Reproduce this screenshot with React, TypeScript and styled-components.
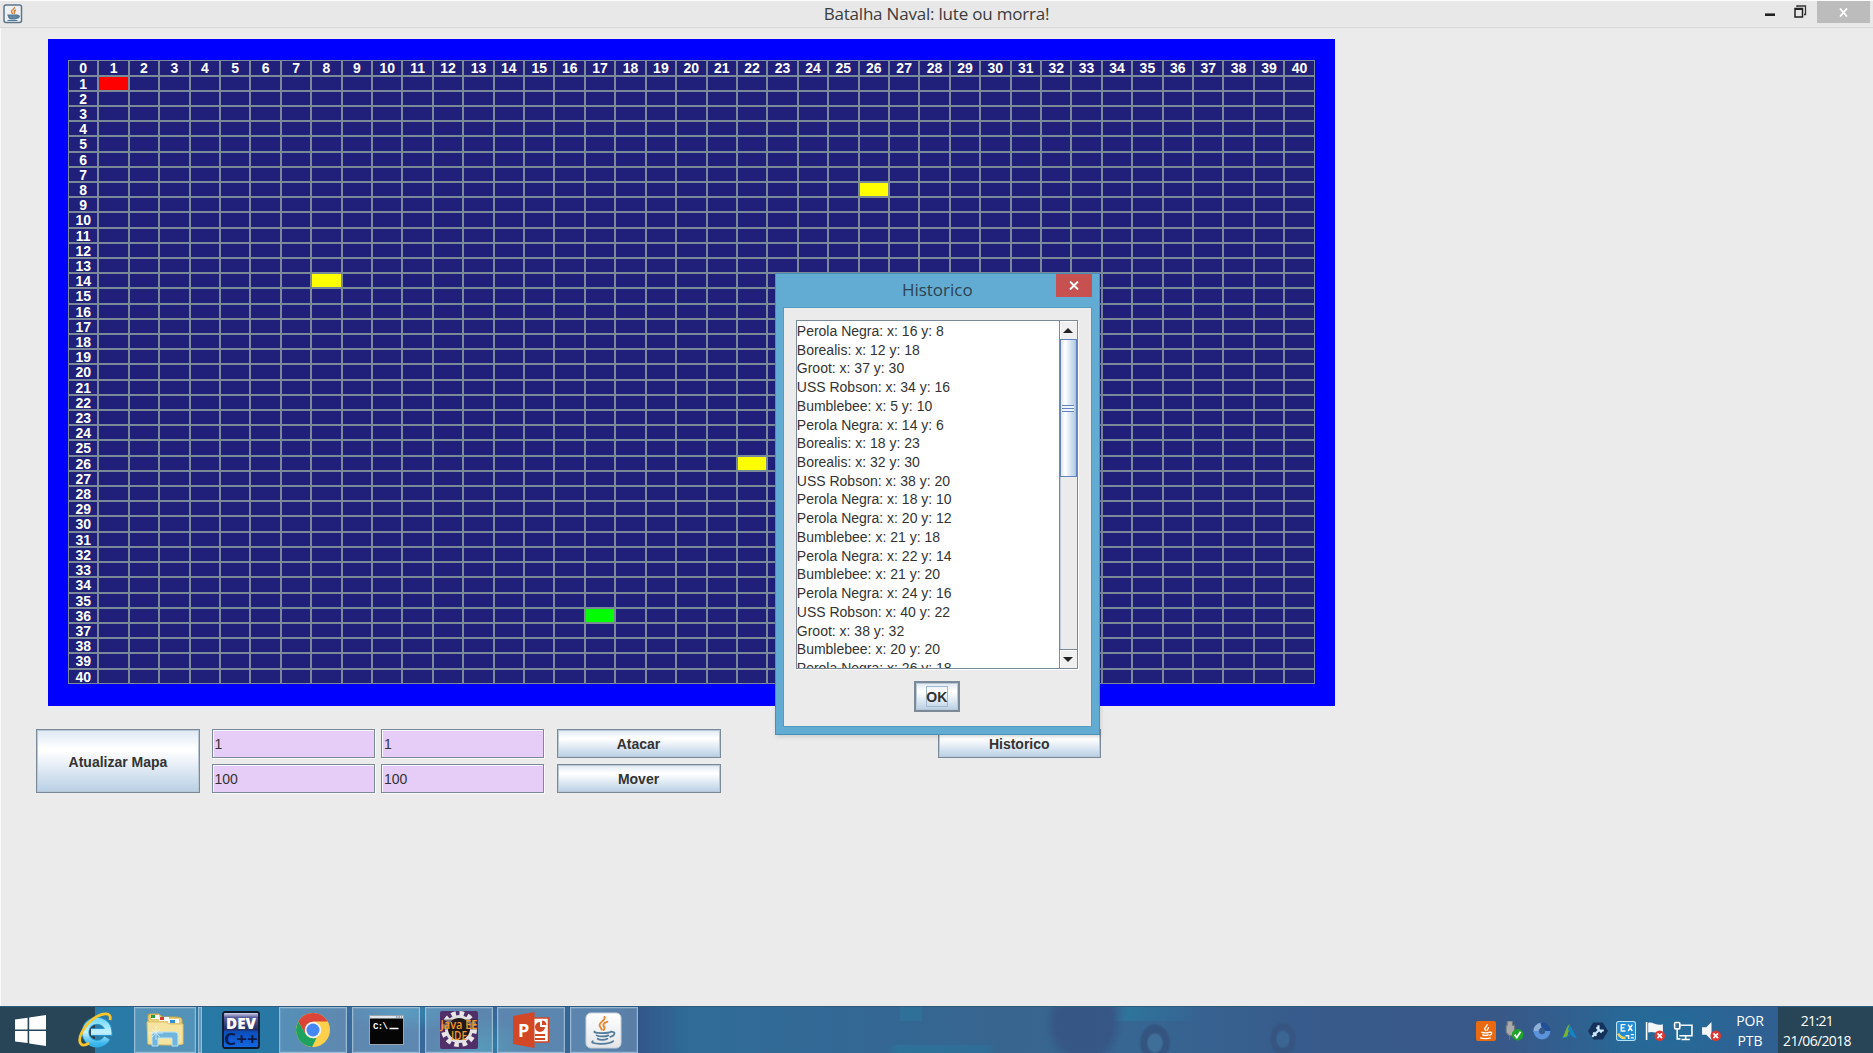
import React from "react";
import styled, { createGlobalStyle } from "styled-components";

const Global = createGlobalStyle`
  html, body { margin: 0; padding: 0; overflow: hidden; }
  * { box-sizing: border-box; }
`;
const SWING = `"Liberation Sans", Arial, sans-serif`;
const SEGOE = `"Open Sans", "Noto Sans", sans-serif`;

const Desktop = styled.div`
  position: relative; width: 1873px; height: 1053px; overflow: hidden;
  display: flex; flex-direction: column; background: #ebebeb; font-family: ${SWING};
`;
const TitleBar = styled.header`
  flex: none; height: 28px; display: grid; grid-template-columns: 1fr auto 1fr; align-items: start;
  background: #e8e8e8; border-top: 1px solid #fbfbfb; border-bottom: 1px solid #d9d9d9;
`;
const AppIcon = styled.div`padding: 3px 0 0 3px; line-height: 0;`;
const WindowTitle = styled.h1`
  margin: 0; font: 400 17px/26px ${SEGOE}; letter-spacing: -0.2px; color: #3c3c3c; white-space: nowrap;
`;
const WindowControls = styled.div`display: flex; justify-content: flex-end; padding-right: 3px; line-height: 0;`;
const CloseGrey = styled.div`
  width: 53px; height: 22px; margin-left: 4px; background: #bcbcbc; display: grid; place-items: center;
`;
const Client = styled.main`
  flex: 1; display: flex; flex-direction: column; align-items: flex-start;
  padding: 11.4px 0 0 35px; border-left: 1px solid #fafafa;
`;
const Board = styled.section`
  margin-left: 11.8px; width: 1287.2px; height: 666.4px; padding: 21px 0 0 20.2px; background: #0000ff;
`;
const Grid = styled.div`
  display: grid; grid-template-columns: repeat(41, 30.42px); grid-template-rows: repeat(41, 15.205px);
`;
const Cell = styled.div<{ $fill?: string }>`
  border: 1px solid #7a8a99; background: ${(p) => p.$fill ?? "#20207a"}; color: #fff;
  font: 700 14px/14px ${SWING}; text-align: center; overflow: hidden;
`;
const Controls = styled.section`
  display: flex; align-items: flex-start; padding-top: 23px;
`;
const Column = styled.div<{ $gap: number }>`
  display: flex; flex-direction: column; gap: 6px; margin-left: ${(p) => p.$gap}px;
`;
const SwingButton = styled.button<{ $w: number; $h: number }>`
  width: ${(p) => p.$w}px; height: ${(p) => p.$h}px; padding: 1px 0 0; border: 1px solid #7a8a99; border-radius: 0;
  box-shadow: inset 0 0 0 1px #b9c8d6;
  background: linear-gradient(#dde8f3 0%, #ffffff 30%, #ffffff 33%, #b8cfe5 100%);
  font: 700 14px ${SWING}; color: #333;
`;
const Field = styled.input`
  width: 163px; height: 29px; padding: 1px 2px 0; border: 1px solid #7a8a99; border-radius: 0; outline: none;
  box-shadow: inset 1px 1px 0 #f6f6fb, 1px 1px 0 #fafafa; background: #e6cdf8; font: 14px ${SWING}; color: #333;
`;
const Dialog = styled.div`
  position: absolute; left: 775px; top: 273px; width: 324.6px; height: 462px;
  display: flex; flex-direction: column; padding: 0 7px 7px; background: #62acd4;
  border: 1px solid #4a8fb5;
  box-shadow: 1px 2px 4px rgba(0,0,0,.12);
`;
const DialogBar = styled.div`
  flex: none; height: 33px; display: grid; grid-template-columns: 36px 1fr 36px;
`;
const DialogTitle = styled.h2`
  margin: 0; text-align: center; font: 400 17px/32px ${SEGOE}; color: #2d4350;
`;
const DialogClose = styled.div`
  height: 23px; background: #c75050; display: grid; place-items: center;
`;
const DialogBody = styled.div`
  flex: 1; min-height: 0; display: flex; flex-direction: column; align-items: center; padding: 12px 1px 0 0;
  background: #ebebeb; border: 1px solid #559bc0;
`;
const ScrollPane = styled.div`
  width: 282px; height: 349px; display: flex; border: 1px solid #7a8a99; background: #fff;
  box-shadow: 1px 1px 0 #fff; margin-bottom: 12px;
`;
const List = styled.ul`
  flex: 1; margin: 0; padding: 1px 0 0; list-style: none; overflow: hidden;
  font: 14px/18.72px ${SWING}; color: #333;
`;
const Item = styled.li`white-space: nowrap;`;
const ScrollBar = styled.div`
  width: 18px; display: flex; flex-direction: column; border-left: 1px solid #7a8a99; background: #ebebeb;
`;
const Arrow = styled.div`
  flex: none; height: 18px; display: grid; place-items: center; background: #f0f0f0;
  box-shadow: inset 1px 1px 0 #fff; line-height: 0;
`;
const Thumb = styled.div`
  height: 138px; border: 1px solid #6382bf; display: grid; place-items: center;
  background: linear-gradient(90deg, #dce7f3, #ffffff 28%, #b8cfe5 90%, #a9c1da);
`;
const Grip = styled.div`
  width: 12px; height: 7px;
  background: repeating-linear-gradient(#6382bf 0 1px, #eef4fb 1px 3px);
`;
const Track = styled.div`flex: 1; border-bottom: 1px solid #7a8a99; box-shadow: inset 1px 0 0 #b9c8d9;`;
const OkButton = styled(SwingButton)`
  flex: none; border: 2px solid #7a8a99; padding: 0; display: grid; place-items: center;
`;
const FocusRing = styled.span`
  border: 1px solid #a3b8cc; width: 22px; height: 21px; line-height: 20px; display: flex; justify-content: center;
`;

const Taskbar = styled.footer`
  flex: none; height: 47px; display: flex; align-items: stretch; border-top: 1px solid #315b7c;
  background:
    radial-gradient(ellipse 60px 20px at 405px 5px, rgba(50,150,190,.7), transparent),
    radial-gradient(ellipse 50px 30px at 480px 40px, rgba(40,150,180,.6), transparent),
    linear-gradient(#2f7099, #2f7099) 900px 0 / 22px 14px no-repeat,
    linear-gradient(90deg, transparent, #2c7299 10%, #2f6d97 90%, transparent) 887px 38px / 110px 9px no-repeat,
    radial-gradient(ellipse 16px 20px at 1155px 36px, #3f6f99 40%, #34557f 55% 85%, transparent),
    radial-gradient(ellipse 14px 18px at 1283px 32px, #3b6592 40%, #365580 55% 80%, transparent),
    linear-gradient(100deg, transparent 4%, rgba(44,118,156,.85) 18%, transparent) 1112px 0 / 90px 14px no-repeat,
    radial-gradient(ellipse 40px 46px at 1084px 16px, rgba(54,82,130,.75) 70%, transparent),
    radial-gradient(ellipse 90px 60px at 1670px 20px, rgba(32,110,155,.7), transparent),
    linear-gradient(90deg, #2a7ca8 0, #2878a6 270px, #3a6a9b 340px, #346596 580px, #32588a 640px, #2f6c97 690px, #346794 880px, #37658f 1000px, #376693 1120px, #375f8e 1250px, #375a8b 1320px, #385888 1500px, #2b6594 1620px, #305f92 1770px);
`;
const StartArea = styled.div`
  width: 95px; background: #284558; display: flex; align-items: center; padding-left: 15px;
`;
const IeSlot = styled.div`width: 39px; display: flex; align-items: center; margin-left: -17px; z-index: 1;`;
const TaskButton = styled.div<{ $w: number; $ml: number; $open?: boolean }>`
  width: ${(p) => p.$w}px; margin-left: ${(p) => p.$ml}px; display: grid; place-items: center;
  ${(p) => p.$open && `
    background: rgba(160,190,215,.36); border: 1px solid rgba(185,210,228,.65);
    box-shadow: inset 0 0 0 1px rgba(150,185,210,.25);`}
`;
const Tray = styled.div`
  margin-left: auto; display: flex; align-items: center; gap: 8.2px; padding: 2px 6px 0 0;
`;
const Lang = styled.div`
  width: 46px; margin-right: 5px; text-align: center; color: #fff; font: 14px/20px ${SEGOE}; padding-top: 4px;
  letter-spacing: -.1px;
`;
const Clock = styled.div`
  width: 95px; padding: 4px 17px 0 0; background: #284558; text-align: center; color: #fff;
  font: 14px/20px ${SEGOE}; letter-spacing: -.65px;
`;

const ships: Record<string, string> = {
  "1,1": "#ff0000", "26,8": "#ffff00", "8,14": "#ffff00", "22,26": "#ffff00", "17,36": "#00ff00",
};
const history = [
  "Perola Negra: x: 16 y: 8", "Borealis: x: 12 y: 18", "Groot: x: 37 y: 30", "USS Robson: x: 34 y: 16",
  "Bumblebee: x: 5 y: 10", "Perola Negra: x: 14 y: 6", "Borealis: x: 18 y: 23", "Borealis: x: 32 y: 30",
  "USS Robson: x: 38 y: 20", "Perola Negra: x: 18 y: 10", "Perola Negra: x: 20 y: 12", "Bumblebee: x: 21 y: 18",
  "Perola Negra: x: 22 y: 14", "Bumblebee: x: 21 y: 20", "Perola Negra: x: 24 y: 16", "USS Robson: x: 40 y: 22",
  "Groot: x: 38 y: 32", "Bumblebee: x: 20 y: 20", "Perola Negra: x: 26 y: 18",
];
const range = Array.from({ length: 41 }, (_, i) => i);

const Cup = ({ steam, cup }: { steam: string; cup: string }) => (
  <g fill="none" strokeLinecap="round">
    <path d="M20 5c2 4-6 5-5 9 .4 1.700 2 2.500 2 4M23 10c-4 1.500-5 3-3.500 5 1 1.500 .5 2.500-.5 3.500" stroke={steam} strokeWidth="1.900" />
    <path d="M10 20c-3 2 14 2.500 17 0M12 24c2 1.500 9 1.500 12 0M13 27.500c2 1.500 7 1.500 10 0M27 20.500c5-1 4 4-1 5M8 30c-5 3 17 4 21 0" stroke={cup} strokeWidth="1.800" />
  </g>
);
const JavaIcon = ({ size }: { size: number }) => (
  <svg width={size} height={size} viewBox="0 0 38 38">
    <defs><linearGradient id="jv" x2="0" y2="1"><stop stopColor="#fff" /><stop offset="1" stopColor="#e3e6e8" /></linearGradient></defs>
    <rect x="1" y="1" width="36" height="36" rx="5" fill="url(#jv)" stroke="#c4d0d9" />
    <Cup steam="#e9822c" cup="#527b9c" />
  </svg>
);
const FrameIcon = () => (
  <svg width="20" height="20" viewBox="0 0 20 20">
    <rect x="1" y="1" width="17.500" height="17.500" rx="2" fill="#edf1f5" stroke="#5f7687" strokeWidth="1.500" />
    <path d="M11.500 3c1 2-4 3-3 5 .5 1 1 1 1 2M13 6c-3 1-1 2-2 4" fill="none" stroke="#e77b2a" strokeWidth="1.400" />
    <path d="M5 11h9v2.500c0 2-7.500 2-8 0zM14 11.500c4-.5 2 3-.5 2.500M4.500 16.500h10" fill="#6488a3" stroke="#537a97" strokeWidth="1.200" />
  </svg>
);
const Windows = () => (
  <svg width="31" height="31" viewBox="0 0 31 31" fill="#fff">
    <path d="M0 4.500 12.600 2.700V14.500H0zM14.200 2.500 31 0v14.500H14.200zM0 16h12.600v12L0 26.500zM14.200 16H31v15l-16.800-2.500z" />
  </svg>
);
const Explorer = () => (
  <svg width="35" height="36" viewBox="0 0 35 36">
    <defs>
      <linearGradient id="ie" x2="0" y2="1"><stop stopColor="#7edcff" /><stop offset=".5" stopColor="#c5f1ff" /><stop offset="1" stopColor="#36b5ec" /></linearGradient>
    </defs>
    <path d="M29 26A11.500 11.500 0 1 1 30.500 20H13" fill="none" stroke="#2d9fd5" strokeWidth="7.500" />
    <path d="M29 26A11.500 11.500 0 1 1 30.500 20H13" fill="none" stroke="url(#ie)" strokeWidth="5.800" />
    <path d="M32 8C34 0 25 0 15 7 5 15-1 27 3 32c2 2 5 1 8-1" fill="none" stroke="#f6c62c" strokeWidth="2.800" />
  </svg>
);
const Folder = () => (
  <svg width="38" height="36" viewBox="0 0 38 36">
    <path d="M2 4q0-2 2-2h9l3 3h12q9 0 8 3v24H2z" fill="#e6cd78" stroke="#c9a944" />
    <rect x="5" y="3" width="8" height="4" fill="#fff" /><rect x="5" y="3" width="4" height="3" fill="#23a335" />
    <rect x="13" y="5" width="10" height="4" fill="#fff" /><rect x="14" y="5" width="4" height="3" fill="#d2402d" />
    <rect x="22" y="7" width="11" height="4" fill="#fff" /><rect x="24" y="8" width="5" height="3" fill="#2f8ed8" />
    <path d="M1 10h19l3 2h14v20q-12 2-35 0z" fill="#f5e49f" stroke="#dfc36a" />
    <path d="M6 34V23q0-3 3-3h20q3 0 3 3v11h-6v-8H12v8z" fill="#72b5dc" stroke="#b9e5f7" />
    <path d="M10 14v14M3 21h14M6 17l8 8M14 17l-8 8" stroke="#fff" strokeWidth="1" opacity=".6" />
  </svg>
);
const DevCpp = () => (
  <svg width="38" height="38" viewBox="0 0 38 38">
    <defs><linearGradient id="dv" x2="0" y2="1"><stop stopColor="#e9e9f6" /><stop offset=".15" stopColor="#5b5e9e" /><stop offset=".48" stopColor="#252c60" /><stop offset=".55" stopColor="#0c4fbd" /><stop offset="1" stopColor="#1368e4" /></linearGradient></defs>
    <rect x="1" y="1" width="36" height="36" rx="2" fill="url(#dv)" stroke="#10182b" strokeWidth="1.800" />
    <text x="19" y="18" textAnchor="middle" textLength="30" lengthAdjust="spacingAndGlyphs" fontFamily={SEGOE} fontWeight="800" fontSize="15" fill="#fff">DEV</text>
    <text x="19" y="34" textAnchor="middle" textLength="34" lengthAdjust="spacingAndGlyphs" fontFamily={SEGOE} fontWeight="700" fontSize="16" fill="#0a1c4a">C++</text>
  </svg>
);
const Chrome = () => (
  <svg width="36" height="36" viewBox="0 0 36 36">
    <circle cx="18" cy="18" r="17" fill="#fcd04b" />
    <path d="M3.300 9.500A17 17 0 0 1 32.700 9.500L18 9.500 10.600 22.200z" fill="#db4437" />
    <path d="M3.300 9.500 10.600 22.200Q14 27 21.500 26L17 35A17 17 0 0 1 3.300 9.500z" fill="#1da260" />
    <circle cx="18" cy="18" r="8.300" fill="#f3f3f3" /><circle cx="18" cy="18" r="6.500" fill="#4587f3" />
  </svg>
);
const Cmd = () => (
  <svg width="35" height="30" viewBox="0 0 35 30">
    <rect x=".5" y=".5" width="34" height="29" fill="#050505" stroke="#9aa5ad" />
    <path d="M1 1h33v2.500H1z" fill="#dfe6ec" /><path d="M27 2h6" stroke="#536677" strokeDasharray="1.500 1" />
    <text x="4" y="14" fontFamily="Liberation Mono, monospace" fontWeight="700" fontSize="9" textLength="15" fill="#fff">C:\</text>
    <path d="M20.500 13.500h9" stroke="#fff" strokeWidth="1.500" />
  </svg>
);
const JavaEE = () => (
  <svg width="38" height="38" viewBox="0 0 38 38" overflow="visible">
    <rect width="38" height="38" rx="2" fill="#513069" />
    <circle cx="19" cy="18" r="15.500" fill="none" stroke="#e7e7e7" strokeWidth="5" strokeDasharray="4.500 3.620" />
    <circle cx="19" cy="18" r="12.500" fill="#191919" stroke="#e2e2e2" strokeWidth="3" />
    <path d="M1 8.500h36v10H1z" fill="#2a1712" opacity=".55" />
    <g fontFamily={SEGOE} fontWeight="600" fill="#f8972b">
      <text x=".5" y="18" fontSize="12" textLength="37" lengthAdjust="spacingAndGlyphs">Java EE</text>
      <text x="11" y="28.500" fontSize="12" textLength="16" lengthAdjust="spacingAndGlyphs">IDE</text>
    </g>
  </svg>
);
const PowerPoint = () => (
  <svg width="37" height="36" viewBox="0 0 37 36">
    <rect x="18" y="6" width="17.500" height="24" fill="#fff" stroke="#d24726" strokeWidth="1.500" />
    <path d="M27 10a5 5 0 1 0 5 5h-5zM29 8.500v4.500h4.500a4.500 4.500 0 0 0-4.500-4.500zM22 22h10v2H22zM22 26h10v2H22z" fill="#d24726" />
    <path d="M0 4 21.500 0v36L0 32z" fill="#d24726" />
    <text x="5" y="25" fontFamily={SEGOE} fontWeight="700" fontSize="18" fill="#fff">P</text>
  </svg>
);
const RedX = () => (
  <g><circle cx="14" cy="14" r="5" fill="#e03632" /><path d="m11.800 11.800 4.400 4.400M16.200 11.800l-4.400 4.400" stroke="#fff" strokeWidth="1.600" /></g>
);
const trayIcons = [
  <g><rect width="19" height="19" rx="2" fill="#e96a10" /><path d="M10.500 3c1 2-3.500 3-2 5l1 1.500M12 6l-1.500 3M5 10.500q4 1.500 8 0M6 13q3 1.500 6 0M13 10.500c3 0 2 3-.5 3M4 16q5 1.500 10 0" fill="none" stroke="#fff" strokeWidth="1.300" /></g>,
  <g><path d="M3 0h5v4h2v7l-2 3H5l-3-3V4h1zM5.500 14v4" fill="#aaa" stroke="#6d757c" strokeWidth="1" /><circle cx="13" cy="13" r="5.500" fill="#20a52b" /><path d="m10 13 2.200 2.700 3.500-5.500" fill="none" stroke="#fff" strokeWidth="1.700" /></g>,
  <g fill="none" strokeWidth="5"><path d="M4 10.500A5.500 5.500 0 0 1 9.500 4" stroke="#8fb0d9" /><path d="M8.500 4a5.500 5.500 0 0 1 6.500 6.500" stroke="#234f94" /><path d="M15 9.500a5.500 5.500 0 0 1-11 0" stroke="#5c93dc" /></g>,
  <g><path d="M2 16c3-3 3-10 7-13l1.500 5c-4 1-2 7-5 8z" fill="#7ab42a" /><path d="m9 3 7 13c-3 0-5-1-6-4L7.500 8z" fill="#1683c4" /><path d="M2 16c3 0 7-2 9-5" stroke="#1683c4" strokeWidth="1" fill="none" /></g>,
  <g><path d="M5 1.500h9l5 8-5 8H5l-5-8z" fill="#15325a" /><path d="m4 15 6-6M10 4v5h5M8 6l5 5M5 11l3 3" stroke="#cce9fc" strokeWidth="2" fill="none" /></g>,
  <g><rect x=".5" y=".5" width="18" height="18" rx="2" fill="#238bd1" stroke="#b7e2f7" /><path d="M5 3.500h4M5 6.500h3M5 9.500h4M5 3v7M11.500 3.500l4 6M15.500 3.500l-4 6M9 14h3v3M14 13h3M14 16h3" stroke="#fff" strokeWidth="1.300" fill="none" /><path d="M2 12q3 5 7 4" stroke="#eed35c" strokeWidth="2.500" fill="none" /></g>,
  <g><path d="M1.500 1v17" stroke="#fff" strokeWidth="1.500" /><path d="M3 2c4-2 6 3 14 1v8c-6 2-9-2-14 0z" fill="#f4f6f8" /><RedX /></g>,
  <g fill="none" stroke="#fff" strokeWidth="1.500"><path d="M7 4h11v10H6M12 14v3M8 17.500h8M4 7v10h3" /><rect x="1.500" y="1.500" width="5" height="6" rx="1" fill="#456c91" /></g>,
  <g><path d="M1 6h4l5-5v17l-5-5H1z" fill="#f4f6f8" /><RedX /></g>,
];

export default function App() {
  return (
    <Desktop>
      <Global />
      <TitleBar>
        <AppIcon><FrameIcon /></AppIcon>
        <WindowTitle>Batalha Naval: lute ou morra!</WindowTitle>
        <WindowControls>
          <svg width="50" height="22" viewBox="0 0 50 22">
            <path d="M2 13.700h10" stroke="#222" strokeWidth="2.600" />
            <path d="M34 6V5h8.500v8.500H41" fill="none" stroke="#333" strokeWidth="1.300" />
            <path d="M32 7.500h7.500V16H32zM32 8.300h7.500" fill="none" stroke="#222" strokeWidth="1.500" />
          </svg>
          <CloseGrey><svg width="9" height="9" viewBox="0 0 9 9"><path d="m1 .5 7 8M8 .5l-7 8" stroke="#fff" strokeWidth="1.800" /></svg></CloseGrey>
        </WindowControls>
      </TitleBar>
      <Client>
        <Board>
          <Grid>
            {range.map((r) => range.map((c) => (
              <Cell key={`${c},${r}`} $fill={ships[`${c},${r}`]}>{r === 0 ? c : c === 0 ? r : null}</Cell>
            )))}
          </Grid>
        </Board>
        <Controls>
          <SwingButton $w={164} $h={64.500}>Atualizar Mapa</SwingButton>
          <Column $gap={11.500}><Field defaultValue="1" /><Field defaultValue="100" /></Column>
          <Column $gap={6.500}><Field defaultValue="1" /><Field defaultValue="100" /></Column>
          <Column $gap={12.500}>
            <SwingButton $w={164} $h={29}>Atacar</SwingButton>
            <SwingButton $w={164} $h={29.500}>Mover</SwingButton>
          </Column>
          <Column $gap={217.500}><SwingButton $w={162.500} $h={29}>Historico</SwingButton></Column>
        </Controls>
      </Client>
      <Taskbar>
        <StartArea><Windows /></StartArea>
        <IeSlot><Explorer /></IeSlot>
        <TaskButton $w={62} $ml={17} $open><Folder /></TaskButton>
        <TaskButton $w={4} $ml={2} $open />
        <TaskButton $w={38} $ml={20}><DevCpp /></TaskButton>
        <TaskButton $w={68} $ml={19} $open><Chrome /></TaskButton>
        <TaskButton $w={68} $ml={5} $open><Cmd /></TaskButton>
        <TaskButton $w={68} $ml={4.500} $open><JavaEE /></TaskButton>
        <TaskButton $w={68} $ml={4.500} $open><PowerPoint /></TaskButton>
        <TaskButton $w={68} $ml={4.500} $open><JavaIcon size={37} /></TaskButton>
        <Tray>
          {trayIcons.map((icon, i) => <svg key={i} width="20" height="20" viewBox="0 0 19 19">{icon}</svg>)}
        </Tray>
        <Lang>POR<br />PTB</Lang>
        <Clock>21:21<br />21/06/2018</Clock>
      </Taskbar>
      <Dialog>
        <DialogBar>
          <span />
          <DialogTitle>Historico</DialogTitle>
          <DialogClose><svg width="10" height="9" viewBox="0 0 10 9"><path d="m1 .5 8 8M9 .5l-8 8" stroke="#fff" strokeWidth="1.900" /></svg></DialogClose>
        </DialogBar>
        <DialogBody>
          <ScrollPane>
            <List>{history.map((h, i) => <Item key={i}>{h}</Item>)}</List>
            <ScrollBar>
              <Arrow><svg width="10" height="5"><path d="M0 5 5 0l5 5z" fill="#222" /></svg></Arrow>
              <Thumb><Grip /></Thumb>
              <Track />
              <Arrow><svg width="10" height="5"><path d="M0 0h10L5 5z" fill="#222" /></svg></Arrow>
            </ScrollBar>
          </ScrollPane>
          <OkButton $w={46} $h={31}><FocusRing>OK</FocusRing></OkButton>
        </DialogBody>
      </Dialog>
    </Desktop>
  );
}
